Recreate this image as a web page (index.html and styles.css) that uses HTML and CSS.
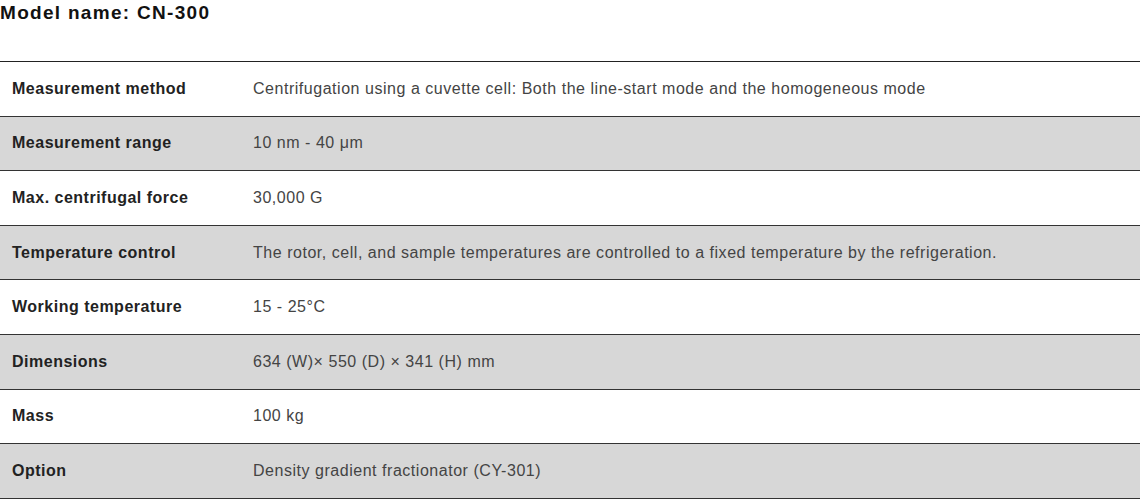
FILE: index.html
```html
<!DOCTYPE html>
<html>
<head>
<meta charset="utf-8">
<link rel="stylesheet" href="styles.css">
</head>
<body>
<h2 class="title">Model name: CN-300</h2>
<table class="spec">
<tbody>
<tr><th>Measurement method</th><td>Centrifugation using a cuvette cell: Both the line-start mode and the homogeneous mode</td></tr>
<tr class="alt"><th>Measurement range</th><td>10 nm - 40 μm</td></tr>
<tr><th>Max. centrifugal force</th><td>30,000 G</td></tr>
<tr class="alt"><th>Temperature control</th><td>The rotor, cell, and sample temperatures are controlled to a fixed temperature by the refrigeration.</td></tr>
<tr><th>Working temperature</th><td>15 - 25°C</td></tr>
<tr class="alt"><th>Dimensions</th><td>634 (W)× 550 (D) × 341 (H) mm</td></tr>
<tr><th>Mass</th><td>100 kg</td></tr>
<tr class="alt"><th>Option</th><td>Density gradient fractionator (CY-301)</td></tr>
</tbody>
</table>
</body>
</html>
```
FILE: styles.css
```css
html, body {
  margin: 0;
  padding: 0;
  background: #fff;
}
body {
  font-family: "Liberation Sans", Arial, sans-serif;
  color: #333;
}
.title {
  margin: 0;
  padding: 3px 0 0 0;
  height: 61px;
  box-sizing: border-box;
  font-size: 19px;
  line-height: 20px;
  font-weight: 900;
  color: #111;
  letter-spacing: 1.3px;
}
.spec {
  width: 100%;
  border-collapse: collapse;
  border-top: 1px solid #222;
}
.spec tr {
  border-bottom: 1px solid #333;
  height: 54.6px;
}
.spec tr.alt {
  background: #d7d7d7;
}
.spec th, .spec td {
  padding: 0 12px;
  font-size: 16px;
  letter-spacing: 0.5px;
  text-align: left;
  vertical-align: middle;
}
.spec th {
  width: 217px;
  font-weight: bold;
  color: #222;
}
.spec td {
  font-weight: normal;
  color: #444;
  letter-spacing: 0.53px;
}
```
